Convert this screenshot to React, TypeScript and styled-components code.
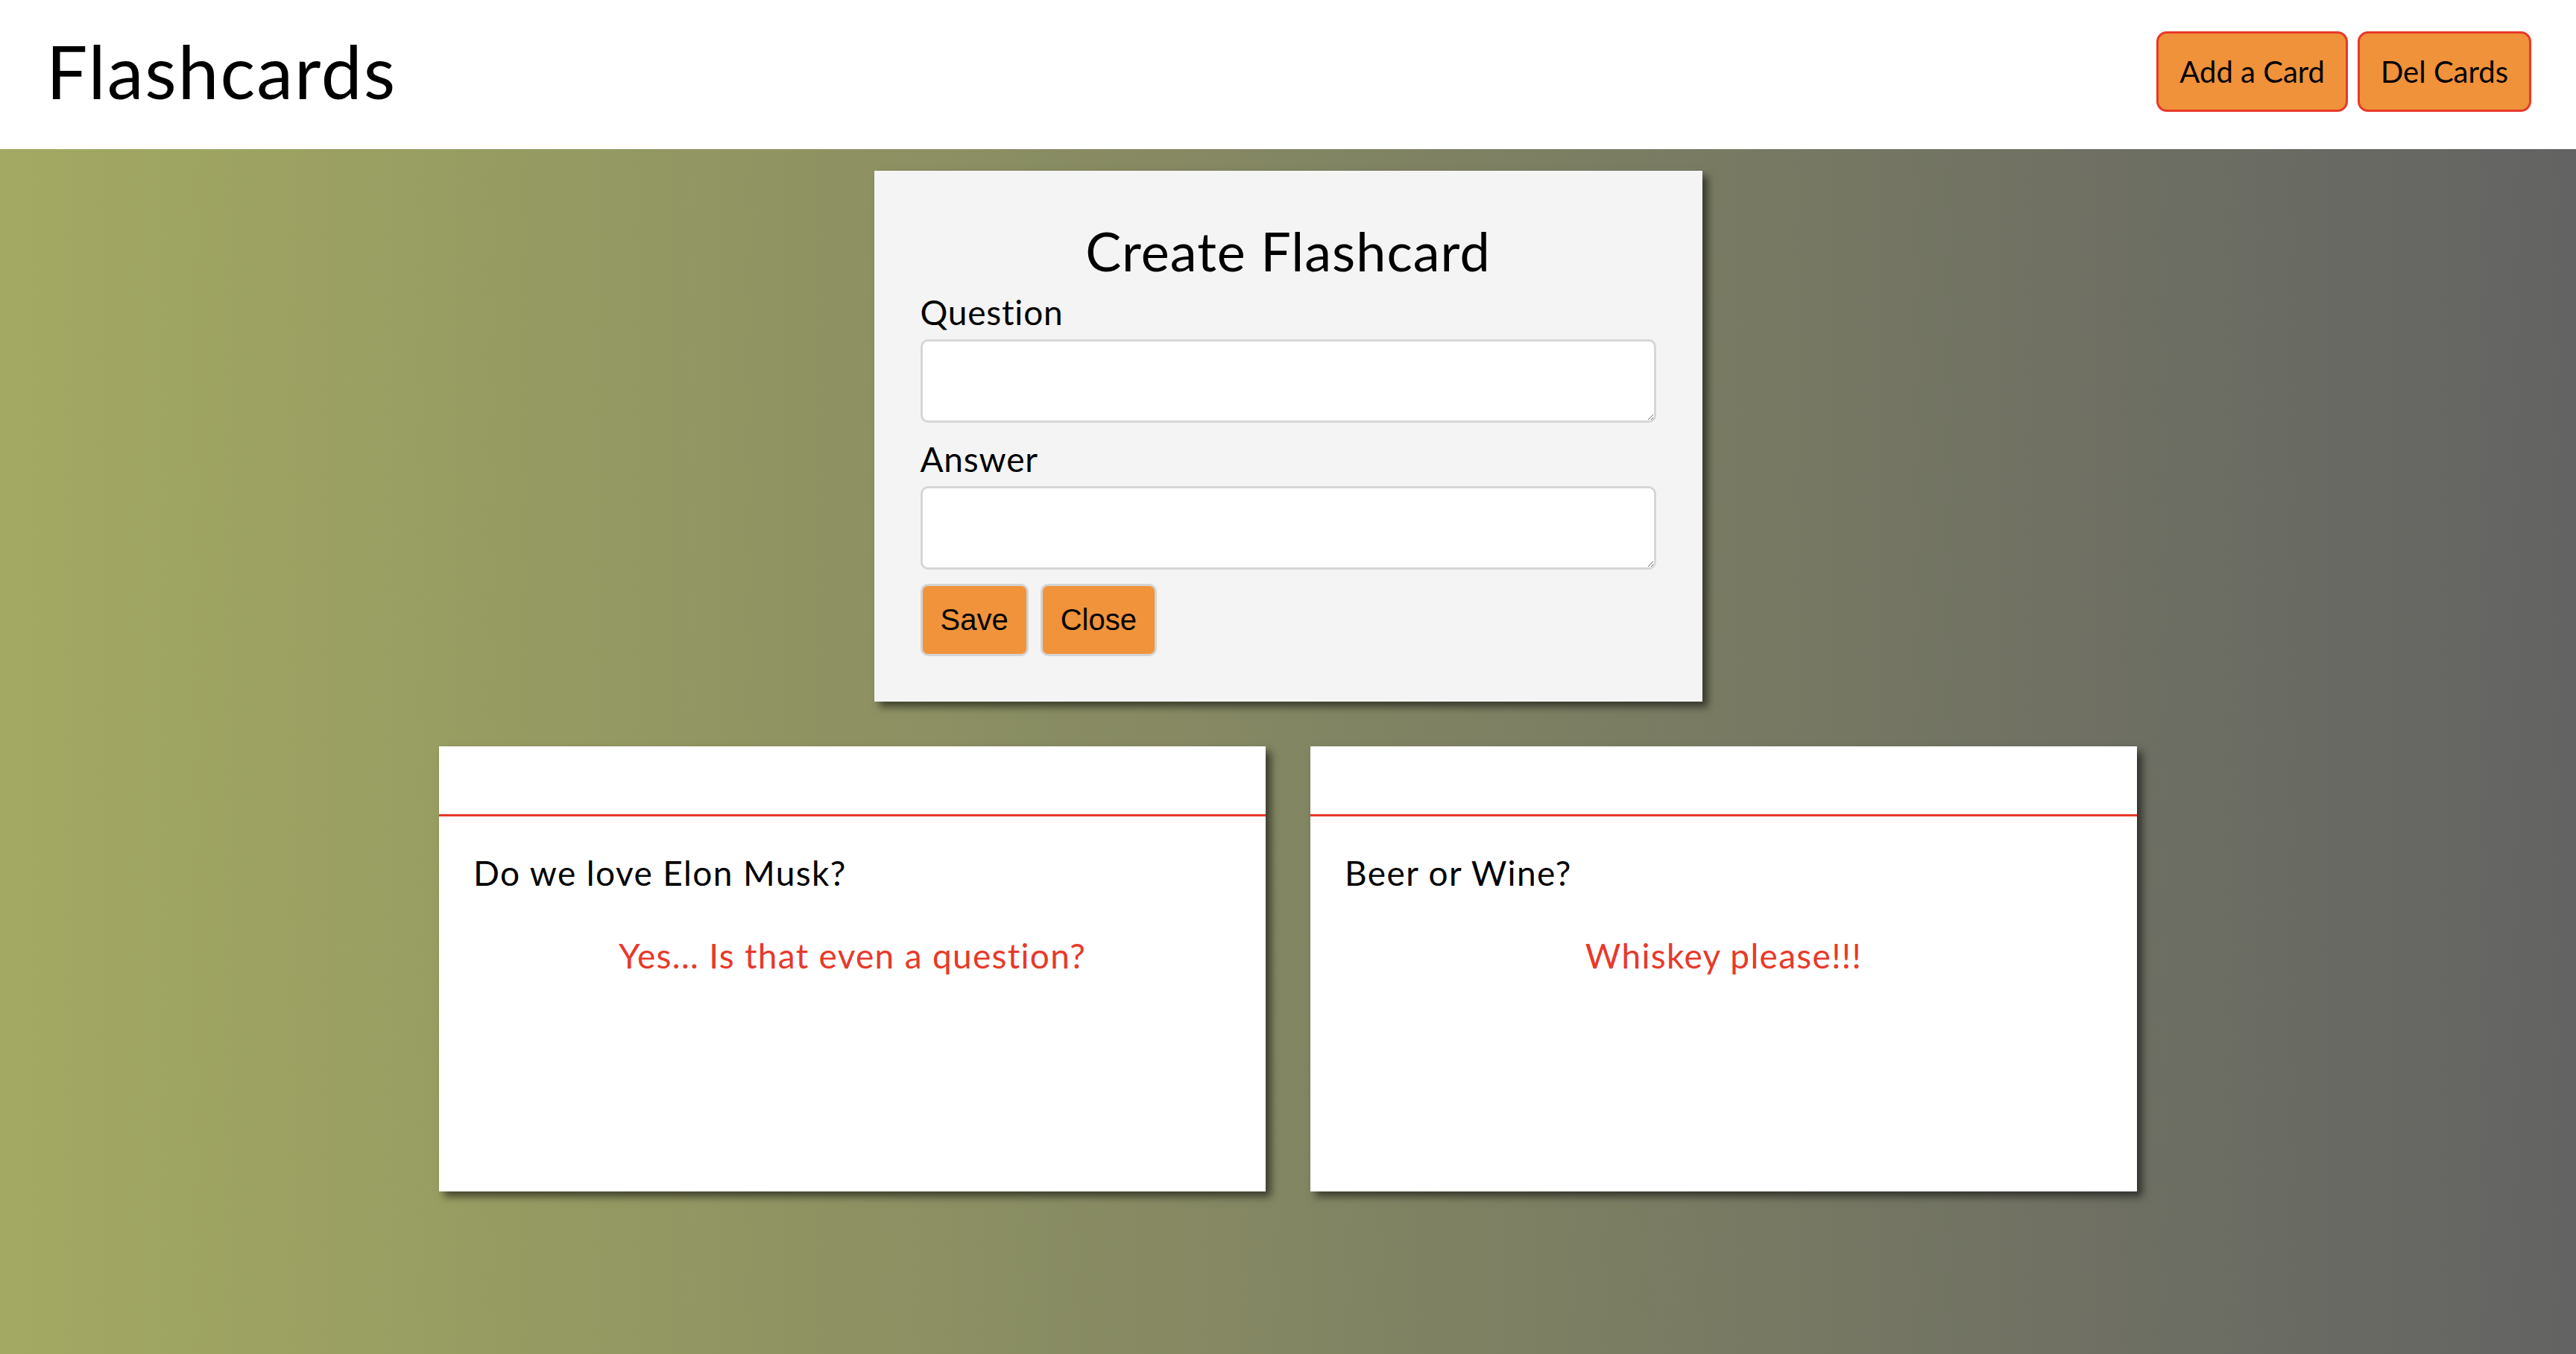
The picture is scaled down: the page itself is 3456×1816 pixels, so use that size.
import React from 'react';
import styled, { createGlobalStyle } from 'styled-components';

const GlobalStyle = createGlobalStyle`
  html, body {
    margin: 0;
    padding: 0;
  }
  body {
    font-family: Lato, "Noto Sans", sans-serif;
    color: #000;
  }
  * {
    box-sizing: border-box;
  }
`;

const Page = styled.div`
  display: flex;
  flex-direction: column;
  min-height: 1816px;
`;

const Header = styled.header`
  display: flex;
  align-items: center;
  justify-content: space-between;
  height: 200px;
  padding: 0 60px 8px 62px;
  background: #fff;
`;

const Logo = styled.h1`
  margin: 0;
  font-size: 98px;
  font-weight: 400;
  line-height: 1.2;
  letter-spacing: 2px;
`;

const HeaderActions = styled.div`
  display: flex;
  gap: 13px;
`;

const HeaderButton = styled.button`
  height: 108px;
  padding: 0 28px;
  font-family: Lato, "Noto Sans", sans-serif;
  font-size: 40px;
  color: #000;
  background: #f0923a;
  border: 3px solid #e8392a;
  border-radius: 14px;
`;

const Main = styled.main`
  flex: 1;
  display: flex;
  flex-direction: column;
  align-items: center;
  padding: 29px 0 80px;
  background: linear-gradient(to right, #a3a962, #636363);
`;

const FormPanel = styled.form`
  display: flex;
  flex-direction: column;
  width: 1111px;
  padding: 64px 62px 61px;
  background: #f4f4f4;
  box-shadow: 7px 7px 10px rgba(0, 0, 0, 0.55);
`;

const FormTitle = styled.h2`
  margin: 0 0 12px;
  font-size: 72px;
  font-weight: 400;
  line-height: 86px;
  letter-spacing: 1px;
  text-align: center;
`;

const Label = styled.label<{ $gap?: number }>`
  display: block;
  margin-top: ${({ $gap }) => $gap ?? 0}px;
  font-size: 46px;
  line-height: 56px;
  letter-spacing: 0.8px;
`;

const TextArea = styled.textarea`
  display: block;
  width: 100%;
  height: 112px;
  margin-top: 8px;
  background: #fff;
  border: 3px solid #d6d6d6;
  border-radius: 10px;
  font-size: 40px;
  outline: none;
`;

const ButtonRow = styled.div`
  display: flex;
  gap: 16px;
  margin-top: 19px;
`;

const FormButton = styled.button`
  height: 97px;
  padding: 0 24px;
  font-family: "Liberation Sans", Arial, sans-serif;
  font-size: 40px;
  color: #000;
  background: #f0933a;
  border: 3px solid #d4d4d4;
  border-radius: 10px;
`;

const CardGrid = styled.div`
  display: flex;
  gap: 60px;
  margin-top: 60px;
`;

const Card = styled.div`
  display: flex;
  flex-direction: column;
  width: 1109px;
  height: 597px;
  background: #fff;
  box-shadow: 7px 7px 10px rgba(0, 0, 0, 0.55);
`;

const CardTop = styled.div`
  height: 94px;
  border-bottom: 3px solid #e8392a;
`;

const CardBody = styled.div`
  display: flex;
  flex-direction: column;
  padding: 48px 46px 0;
`;

const Question = styled.div`
  font-size: 46px;
  line-height: 56px;
  letter-spacing: 1.4px;
`;

const Answer = styled.div`
  margin-top: 55px;
  font-size: 46px;
  line-height: 56px;
  letter-spacing: 1.3px;
  color: #e8392a;
  text-align: center;
`;

const cards = [
  { q: 'Do we love Elon Musk?', a: 'Yes... Is that even a question?' },
  { q: 'Beer or Wine?', a: 'Whiskey please!!!' },
];

const App = () => (
  <Page>
    <GlobalStyle />
    <Header>
      <Logo>Flashcards</Logo>
      <HeaderActions>
        <HeaderButton>Add a Card</HeaderButton>
        <HeaderButton>Del Cards</HeaderButton>
      </HeaderActions>
    </Header>
    <Main>
      <FormPanel onSubmit={(e) => e.preventDefault()}>
        <FormTitle>Create Flashcard</FormTitle>
        <Label>Question</Label>
        <TextArea />
        <Label $gap={21}>Answer</Label>
        <TextArea />
        <ButtonRow>
          <FormButton type="submit">Save</FormButton>
          <FormButton type="button">Close</FormButton>
        </ButtonRow>
      </FormPanel>
      <CardGrid>
        {cards.map((card) => (
          <Card key={card.q}>
            <CardTop />
            <CardBody>
              <Question>{card.q}</Question>
              <Answer>{card.a}</Answer>
            </CardBody>
          </Card>
        ))}
      </CardGrid>
    </Main>
  </Page>
);

export default App;
